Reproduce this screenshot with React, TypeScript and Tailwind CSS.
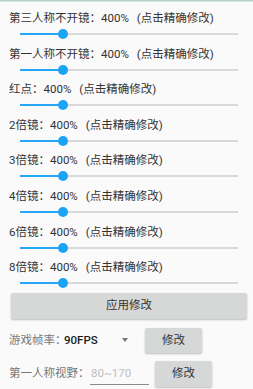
import React from 'react'

const rows = [
  '第三人称不开镜',
  '第一人称不开镜',
  '红点',
  '2倍镜',
  '3倍镜',
  '4倍镜',
  '6倍镜',
  '8倍镜',
]

function Slider({ value }: { value: number }) {
  return (
    <div className="relative h-[10px] ml-[20px] mr-[15px] flex items-center">
      <div className="h-[2px] w-full bg-[#d9d9d9]" />
      <div className="absolute left-0 h-[2px] bg-[#25a7f7]" style={{ width: `${value}%` }} />
      <div
        className="absolute w-[10px] h-[10px] rounded-full bg-[#1da3f5] -translate-x-1/2"
        style={{ left: `${value}%` }}
      />
    </div>
  )
}

export default function App() {
  return (
    <div
      className="relative w-[253px] h-[389px] overflow-hidden bg-[#fafafa] text-[11.5px] text-[#333]"
      style={{ fontFamily: 'Roboto, "Noto Sans CJK SC", sans-serif' }}
    >
      <div className="absolute top-0 left-0 right-0 h-[2px] bg-gradient-to-b from-[#a3c6c0] to-[#eef3f2]" />

      <div className="pt-[8px]">
        {rows.map((name) => (
          <div key={name} className="h-[35.6px]">
            <div className="h-[21px] leading-[21px] pl-[9px] whitespace-nowrap flex">
              <span>{name}：400%</span>
              <span className="ml-[8px]">(点击精确修改)</span>
            </div>
            <Slider value={19.7} />
          </div>
        ))}
      </div>

      <button className="block mx-[11px] w-[236px] h-[26px] rounded-[2px] bg-[#d6d7d7] shadow-[0_1px_2px_rgba(0,0,0,0.25)] text-[11.5px] text-[#333]">
        应用修改
      </button>

      <div className="flex items-center h-[25px] mt-[9px]">
        <span className="pl-[9px] w-[64px] whitespace-nowrap text-[#777]">游戏帧率：</span>
        <div className="w-[71px] flex items-center justify-between pr-[7px]">
          <span className="text-[#1a1a1a] font-medium">90FPS</span>
          <span className="w-0 h-0 border-l-[3.5px] border-r-[3.5px] border-t-[4px] border-l-transparent border-r-transparent border-t-[#777]" />
        </div>
        <button className="ml-[10px] w-[57px] h-[25px] rounded-[2px] bg-[#d6d7d7] shadow-[0_1px_2px_rgba(0,0,0,0.25)] text-[11.5px] text-[#333]">
          修改
        </button>
      </div>

      <div className="flex items-center h-[26px] mt-[8px]">
        <span className="pl-[9px] w-[86px] whitespace-nowrap text-[#777]">第一人称视野：</span>
        <div className="ml-[4px] w-[59px] h-[22px] border-b border-[#8a8a8a] flex items-center pl-[1px] text-[#bdbdbd]">
          80~170
        </div>
        <button className="ml-[6px] w-[57px] h-[26px] rounded-[2px] bg-[#d6d7d7] shadow-[0_1px_2px_rgba(0,0,0,0.25)] text-[11.5px] text-[#333]">
          修改
        </button>
      </div>
    </div>
  )
}
